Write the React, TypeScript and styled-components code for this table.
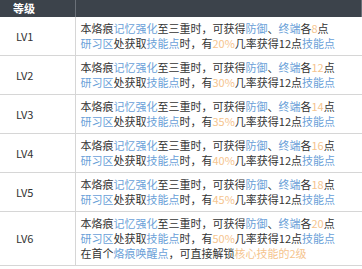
import React from "react";
import styled, { createGlobalStyle } from "styled-components";

const Global = createGlobalStyle`
  html, body { margin: 0; padding: 0; background: #fff; }
  body { font-family: "Noto Sans CJK SC", "Noto Sans", sans-serif; overflow: hidden; }
  * { box-sizing: border-box; }
`;

const Table = styled.table`
  border-collapse: collapse;
  width: 362px;
  font-size: 11px;
  color: #333;
  table-layout: fixed;
`;

const HeadCell = styled.th<{ $w?: number }>`
  background: #3c434b;
  color: #fff;
  font-weight: bold;
  text-align: left;
  height: 17px;
  padding: 0 0 0 13px;
  font-size: 11px;
  line-height: 17px;
  width: ${(p) => (p.$w ? `${p.$w}px` : "auto")};
  border-right: 1px solid #6a7078;
`;

const Row = styled.tr`
  border-bottom: 1px solid #d6d6d6;
`;

const LevelCell = styled.td`
  padding: 0 0 0 16px;
  border-right: 1px solid #d6d6d6;
  vertical-align: middle;
  line-height: 15px;
`;

const DescCell = styled.td`
  padding: 4px 0 4px 5px;
  line-height: 15px;
  white-space: nowrap;
`;

const Blue = styled.span`
  color: #6a9fd8;
`;

const Orange = styled.span`
  color: #f5c48e;
`;

const rows = [
  { lv: "LV1", n: "8", p: "20%" },
  { lv: "LV2", n: "12", p: "30%" },
  { lv: "LV3", n: "14", p: "35%" },
  { lv: "LV4", n: "16", p: "40%" },
  { lv: "LV5", n: "18", p: "45%" },
  { lv: "LV6", n: "20", p: "50%", extra: true },
];

export default function App() {
  return (
    <>
      <Global />
      <Table>
        <thead>
          <tr>
            <HeadCell $w={75}>等级</HeadCell>
            <HeadCell />
          </tr>
        </thead>
        <tbody>
          {rows.map((r) => (
            <Row key={r.lv}>
              <LevelCell>{r.lv}</LevelCell>
              <DescCell>
                本烙痕<Blue>记忆强化</Blue>至三重时，可获得<Blue>防御</Blue>、<Blue>终端</Blue>各<Orange>{r.n}</Orange>点
                <br />
                <Blue>研习区</Blue>处获取<Blue>技能点</Blue>时，有<Orange>{r.p}</Orange>几率获得12点<Blue>技能点</Blue>
                {r.extra && (
                  <>
                    <br />
                    在首个<Blue>烙痕唤醒点</Blue>，可直接解锁<Orange>核心技能的2级</Orange>
                  </>
                )}
              </DescCell>
            </Row>
          ))}
        </tbody>
      </Table>
    </>
  );
}
